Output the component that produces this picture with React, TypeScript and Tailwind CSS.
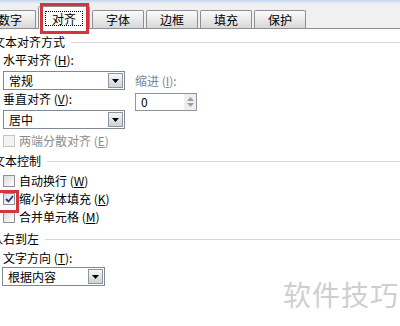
import type { ReactNode } from "react";

const tabs = ["数字", "对齐", "字体", "边框", "填充", "保护"];

function Arrow() {
  return (
    <svg width="7" height="4" viewBox="0 0 7 4">
      <path d="M0 0H7L3.5 4Z" fill="#000" />
    </svg>
  );
}

function Dropdown({ value, width }: { value: string; width: string }) {
  return (
    <div
      className={`${width} flex h-[19px] items-center border border-[#7f8a96] bg-white p-[1px]`}
    >
      <span className="flex-1 pl-[4px] text-[12px] leading-[15px]">{value}</span>
      <span className="flex h-[15px] w-[15px] items-center justify-center border border-[#8f959c] bg-gradient-to-b from-[#f7f7f7] to-[#cfd2d6]">
        <Arrow />
      </span>
    </div>
  );
}

function Checkbox({
  label,
  checked = false,
  disabled = false,
}: {
  label: ReactNode;
  checked?: boolean;
  disabled?: boolean;
}) {
  return (
    <div className="flex h-[16px] items-center">
      <span
        className={
          disabled
            ? "flex h-[12px] w-[12px] items-center justify-center border border-[#c4c4c4] bg-[#f3f3f3]"
            : "flex h-[12px] w-[12px] items-center justify-center border border-[#8e9094] bg-gradient-to-br from-[#d9dade] to-white"
        }
      >
        {checked && (
          <svg width="9" height="8" viewBox="0 0 9 8">
            <path d="M1 4L3.5 6.5L8 1" fill="none" stroke="#1f3a8c" strokeWidth="1.8" />
          </svg>
        )}
      </span>
      <span
        className={`ml-[4px] text-[12px] leading-[16px] ${disabled ? "text-[#8c8c8c]" : "text-black"}`}
      >
        {label}
      </span>
    </div>
  );
}

function GroupHeader({ title, offset }: { title: string; offset: string }) {
  return (
    <div className="flex h-[16px] items-center">
      <span className={`${offset} whitespace-nowrap text-[12px] leading-[16px]`}>{title}</span>
      <span className="ml-[6px] mr-[-3px] h-px flex-1 bg-[#d6d6d6]" />
    </div>
  );
}

export default function App() {
  return (
    <div className="relative h-[326px] w-[400px] overflow-hidden bg-white font-['Noto_Sans_CJK_SC',sans-serif] text-black">
      <div className="h-[3px] bg-gradient-to-b from-[#c4d6ec] to-[#e3ebf4]" />
      <div className="flex h-[26px] items-end gap-[2px] border-b border-[#8c8f94] bg-[#f0f0f0] pl-0">
        <div className="ml-[-16px] flex items-end gap-[2px]">
          {tabs.map((tab) =>
            tab === "对齐" ? (
              <div
                key={tab}
                className="relative mb-[-1px] flex h-[23px] w-[52px] items-center justify-center rounded-t-[2px] border border-b-0 border-[#8c8f94] bg-white"
              >
                <span className="border border-dotted border-black px-[6px] text-[12px] leading-[13px]">
                  {tab}
                </span>
              </div>
            ) : (
              <div
                key={tab}
                className="flex h-[18px] w-[52px] items-center justify-center rounded-t-[2px] border border-b-0 border-[#8c8f94] bg-gradient-to-b from-[#fbfbfb] to-[#d8d8d8] text-[12px] leading-[16px]"
              >
                {tab}
              </div>
            )
          )}
        </div>
      </div>

      <div className="px-[3px] pt-[5px]">
        <GroupHeader title="文本对齐方式" offset="ml-[-10px]" />

        <div className="mt-[2px] flex">
          <div className="w-[122px]">
            <div className="h-[16px] text-[12px] leading-[16px]">
              水平对齐 (<u>H</u>):
            </div>
            <div className="mt-[3px]">
              <Dropdown value="常规" width="w-[122px]" />
            </div>
            <div className="h-[18px] text-[12px] leading-[18px]">
              垂直对齐 (<u>V</u>):
            </div>
            <div className="mt-[2px]">
              <Dropdown value="居中" width="w-[122px]" />
            </div>
          </div>

          <div className="ml-[10px] w-[62px] pt-[21px]">
            <div className="h-[16px] text-[12px] leading-[16px] text-[#7d8690]">
              缩进 (<u>I</u>):
            </div>
            <div className="mt-[4px] flex h-[18px] items-center border border-[#8f959c] bg-white">
              <span className="flex-1 pl-[5px] text-[12px] leading-[16px]">0</span>
              <span className="flex h-full w-[12px] flex-col items-center justify-center gap-[2px] bg-[#eeeeee]">
                <svg width="7" height="4" viewBox="0 0 7 4">
                  <path d="M0 4H7L3.5 0Z" fill="#9aa0a6" />
                </svg>
                <svg width="7" height="4" viewBox="0 0 7 4">
                  <path d="M0 0H7L3.5 4Z" fill="#9aa0a6" />
                </svg>
              </span>
            </div>
          </div>
        </div>

        <div className="mt-[4px]">
          <Checkbox label={<>两端分散对齐 (<u>E</u>)</>} disabled />
        </div>

        <div className="mt-[4px]">
          <GroupHeader title="文本控制" offset="ml-[-10px]" />
        </div>
        <div className="mt-[4px]">
          <Checkbox label={<>自动换行 (<u>W</u>)</>} />
        </div>
        <div className="mt-[2px]">
          <Checkbox label={<>缩小字体填充 (<u>K</u>)</>} checked />
        </div>
        <div className="mt-[2px]">
          <Checkbox label={<>合并单元格 (<u>M</u>)</>} />
        </div>

        <div className="mt-[6px]">
          <GroupHeader title="从右到左" offset="ml-[-12px]" />
        </div>
        <div className="mt-[3px] h-[16px] text-[12px] leading-[16px]">
          文字方向 (<u>T</u>):
        </div>
        <div className="ml-[-1px] mt-[1px]">
          <Dropdown value="根据内容" width="w-[103px]" />
        </div>
      </div>

      {/* annotation boxes */}
      <div className="pointer-events-none absolute left-[40px] top-[3px] h-[31px] w-[49px] border-[3px] border-[#d2363c]" />
      <div className="pointer-events-none absolute left-[-3px] top-[190px] h-[23px] w-[22px] border-[3px] border-[#d2363c]" />

      <div className="pointer-events-none absolute left-[283px] top-[276px] text-[28px] leading-[36px] tracking-[1px] text-[#cfcfcf]">
        软件技巧
      </div>
    </div>
  );
}
